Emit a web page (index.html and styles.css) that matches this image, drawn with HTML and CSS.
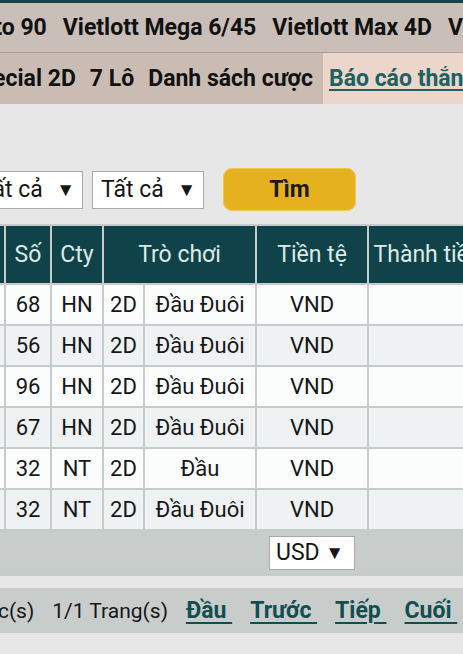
FILE: index.html
```html
<!DOCTYPE html>
<html>
<head>
    <title>Danh sách cược</title>
    <link rel="stylesheet" href="styles.css">
</head>
<body>
<div class="page">
    <nav class="menu menu-main">
        <div class="menu-track track-main">
            <a>Lotto 90</a>
            <a>Vietlott Mega 6/45</a>
            <a>Vietlott Max 4D</a>
            <a>Vietlott Power 6/55</a>
        </div>
    </nav>
    <nav class="menu menu-sub">
        <div class="menu-track track-sub">
            <a>Special 2D</a>
            <a>7 Lô</a>
            <a>Danh sách cược</a>
            <a class="active"><span>Báo cáo thắng thua</span></a>
        </div>
    </nav>

    <div class="filters">
        <div class="fake-select"><span>Tất cả</span><span class="arrow">▼</span></div>
        <div class="fake-select"><span>Tất cả</span><span class="arrow">▼</span></div>
        <button class="search-btn">Tìm</button>
    </div>

    <table class="bets">
        <colgroup>
            <col class="c-idx"><col class="c-num"><col class="c-city"><col class="c-type">
            <col class="c-game"><col class="c-cur"><col class="c-total">
        </colgroup>
        <thead>
            <tr><th>STT</th><th>Số</th><th>Cty</th><th colspan="2">Trò chơi</th><th>Tiền tệ</th><th>Thành tiền</th></tr>
        </thead>
        <tbody>
            <tr><td>1</td><td>68</td><td>HN</td><td>2D</td><td>Đầu Đuôi</td><td>VND</td><td></td></tr>
            <tr><td>2</td><td>56</td><td>HN</td><td>2D</td><td>Đầu Đuôi</td><td>VND</td><td></td></tr>
            <tr><td>3</td><td>96</td><td>HN</td><td>2D</td><td>Đầu Đuôi</td><td>VND</td><td></td></tr>
            <tr><td>4</td><td>67</td><td>HN</td><td>2D</td><td>Đầu Đuôi</td><td>VND</td><td></td></tr>
            <tr><td>5</td><td>32</td><td>NT</td><td>2D</td><td>Đầu</td><td>VND</td><td></td></tr>
            <tr><td>6</td><td>32</td><td>NT</td><td>2D</td><td>Đầu Đuôi</td><td>VND</td><td></td></tr>
        </tbody>
        <tfoot>
            <tr>
                <td colspan="5"></td>
                <td><div class="fake-select small"><span>USD</span><span class="arrow">▼</span></div></td>
                <td></td>
            </tr>
        </tfoot>
    </table>

    <div class="pager">
        <div class="pager-track">
            <span>6 Mục(s)</span>
            <span>1/1 Trang(s)</span>
            <a>Đầu&nbsp;</a>
            <a>Trước&nbsp;</a>
            <a>Tiếp&nbsp;</a>
            <a>Cuối&nbsp;</a>
        </div>
    </div>
</div>
</body>
</html>
```

FILE: styles.css
```css
:root {
    --page-bg: #e6e7e6;
    --text-color: #161616;
    --teal-dark: #0f4349;
    --teal-link: #114e4f;
    --menu-bg: #c9bfb8;
    --submenu-bg: #cbbcb3;
    --active-bg: #ecd5ca;
    --grid-color: #c5cccb;
    --row-alt-bg: #eef2f2;
    --footer-bg: #c8cdcc;
    --gold: #e6b11e;
}

body {
    margin: 0;
    font-family: Roboto, "Noto Sans", sans-serif;
    background-color: var(--page-bg);
    color: var(--text-color);
}

.page {
    width: 463px;
    height: 654px;
    overflow: hidden;
    border-top: 3px solid #14474c;
    box-sizing: border-box;
}

/* --- MENUS --- */
.menu { white-space: nowrap; font-size: 23px; font-weight: 700; }
.menu-track { display: flex; }
.menu a { padding: 0 8px; color: #111; }

.menu-main {
    height: 49px;
    background-color: var(--menu-bg);
    border-bottom: 1px solid #a9a09a;
}
.menu-main a { line-height: 49px; }
.track-main { margin-left: -47px; }

.menu-sub {
    height: 51px;
    background-color: var(--submenu-bg);
}
.menu-sub a { line-height: 51px; padding: 0 7px; }
.track-sub { margin-left: -41px; }
.menu-sub a.active { background-color: var(--active-bg); padding: 0 6px; margin-left: 3px; }
.menu-sub a.active span { color: #1b6363; text-decoration: underline; text-decoration-thickness: 2px; text-underline-offset: 3px; }

/* --- FILTERS --- */
.filters {
    display: flex;
    align-items: center;
    margin-left: -29px;
    padding-top: 64px;
    height: 43px;
}

.fake-select {
    display: flex;
    justify-content: space-between;
    align-items: center;
    box-sizing: border-box;
    width: 112px;
    height: 38px;
    padding: 0 7px 0 8px;
    background-color: #fff;
    border: 1px solid #a9a9a9;
    font-size: 23px;
    margin-right: 9px;
}
.fake-select .arrow { font-size: 19px; }

.search-btn {
    width: 133px;
    height: 43px;
    margin-left: 10px;
    background-color: var(--gold);
    border: 1px solid #efc451;
    border-radius: 9px;
    font-family: inherit;
    font-size: 23px;
    font-weight: 700;
    color: #1a1a1a;
}

/* --- TABLE --- */
.bets {
    margin-top: 13px;
    margin-left: -96px;
    width: 582px;
    table-layout: fixed;
    border-collapse: collapse;
    font-size: 22px;
}
.c-idx { width: 100px; }
.c-num { width: 46px; }
.c-city { width: 52px; }
.c-type { width: 41px; }
.c-game { width: 112px; }
.c-cur { width: 112px; }
.c-total { width: 119px; }

.bets th, .bets td {
    border: 2px solid var(--grid-color);
    text-align: center;
    padding: 0;
    white-space: nowrap;
}
.bets th {
    height: 57px;
    background-color: var(--teal-dark);
    color: #dfe9e6;
    font-weight: 400;
    font-size: 23px;
}
.bets tbody td { height: 39px; background-color: #fbfcfc; }
.bets tbody tr:nth-child(even) td { background-color: var(--row-alt-bg); }

.bets tfoot td { height: 43px; background-color: var(--footer-bg); }
.fake-select.small { width: 86px; height: 34px; margin: 0 auto; padding: 0 10px 0 6px; }

/* --- PAGER --- */
.pager {
    margin-top: 12px;
    height: 45px;
    background-color: var(--footer-bg);
    font-size: 21px;
    white-space: nowrap;
}
.pager-track {
    display: flex;
    align-items: center;
    gap: 18px;
    height: 45px;
    margin-left: -49px;
}
.pager a {
    color: var(--teal-link);
    font-weight: 700;
    font-size: 23px;
    text-decoration: underline;
    text-decoration-thickness: 2px;
    text-underline-offset: 4px;
}
```
